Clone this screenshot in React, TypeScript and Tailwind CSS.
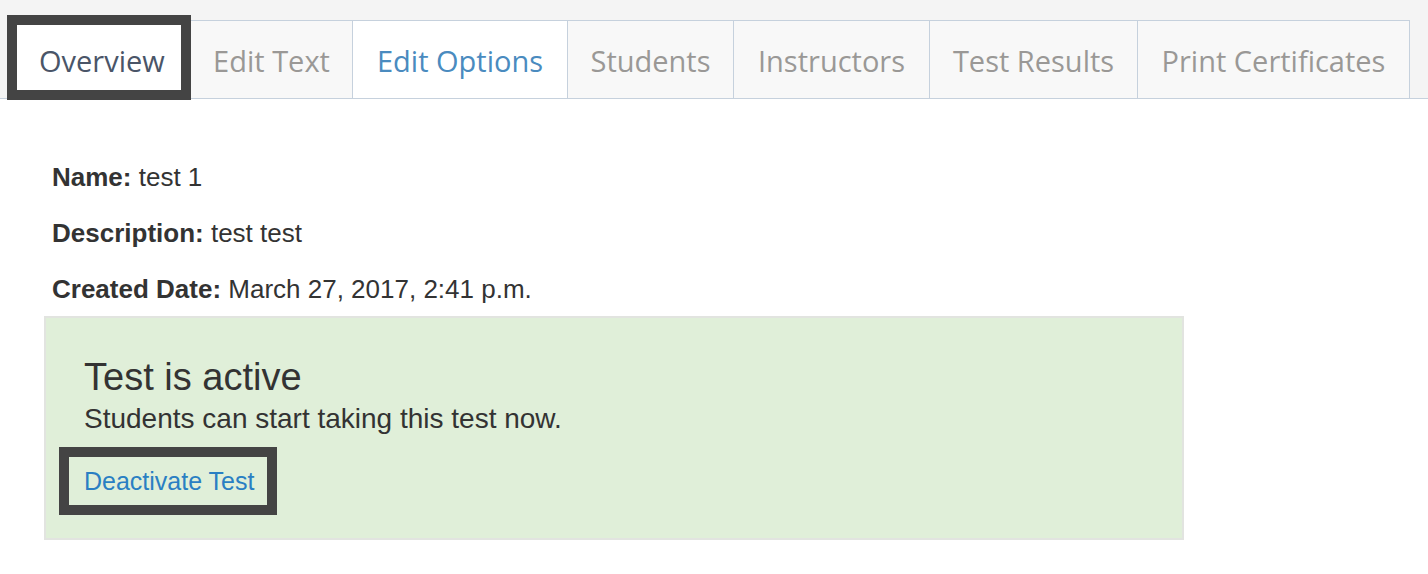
const tabs = [
    { label: 'Edit Text', width: 'w-[162px]', tone: 'bg-[#f8f8f8] text-[#9a9896]' },
    { label: 'Edit Options', width: 'w-[215px]', tone: 'bg-white text-[#4a8bbf]' },
    { label: 'Students', width: 'w-[166px]', tone: 'bg-[#f8f8f8] text-[#9a9896]' },
    { label: 'Instructors', width: 'w-[196px]', tone: 'bg-[#f8f8f8] text-[#9a9896]' },
    { label: 'Test Results', width: 'w-[208px]', tone: 'bg-[#f8f8f8] text-[#9a9896]' },
    { label: 'Print Certificates', width: 'w-[272px]', tone: 'bg-[#f8f8f8] text-[#9a9896]' },
];

const details = [
    { label: 'Name:', value: 'test 1' },
    { label: 'Description:', value: 'test test' },
    { label: 'Created Date:', value: 'March 27, 2017, 2:41 p.m.' },
];

export default function App() {
    return (
        <div className="min-h-[574px] w-[1428px] bg-white">
            <div className="flex h-[99px] items-start border-b border-[#c6d1dd] bg-[#f4f4f4] pt-[15px] pl-[7px] font-['Open_Sans',sans-serif] text-[29px]">
                <div className="relative z-10 h-[85px] w-[184px] border-[10px] border-[#444444] bg-white pt-[16px] pl-[22px] leading-[40px] text-[#4a5568]">
                    Overview
                </div>
                {tabs.map((tab) => (
                    <div
                        key={tab.label}
                        className={`mt-[5px] flex h-[78px] justify-center border-t border-r border-[#c6d1dd] pt-[20px] leading-[40px] whitespace-nowrap ${tab.width} ${tab.tone}`}
                    >
                        {tab.label}
                    </div>
                ))}
            </div>

            <div className="pt-[63px] pl-[52px] font-['Liberation_Sans',Arial,sans-serif] text-[#333333]">
                <div className="flex flex-col gap-[26px] text-[26px] leading-[30px]">
                    {details.map((row) => (
                        <p key={row.label}>
                            <span className="font-bold">{row.label}</span> {row.value}
                        </p>
                    ))}
                </div>

                <div className="mt-[12px] -ml-[8px] h-[224px] w-[1140px] border-2 border-[#e2e4e0] bg-[#e0efd9] pt-[39px] pb-[23px] pl-[38px]">
                    <h2 className="text-[38px] leading-[40px]">Test is active</h2>
                    <p className="mt-[6px] text-[28px] leading-[32px]">Students can start taking this test now.</p>
                    <div className="mt-[12px] -ml-[25px] inline-block border-[10px] border-[#444444] pl-[15px] pr-[13px]">
                        <a href="#" className="block text-[25px] leading-[48px] text-[#2a7fc3]">
                            Deactivate Test
                        </a>
                    </div>
                </div>
            </div>
        </div>
    );
}
